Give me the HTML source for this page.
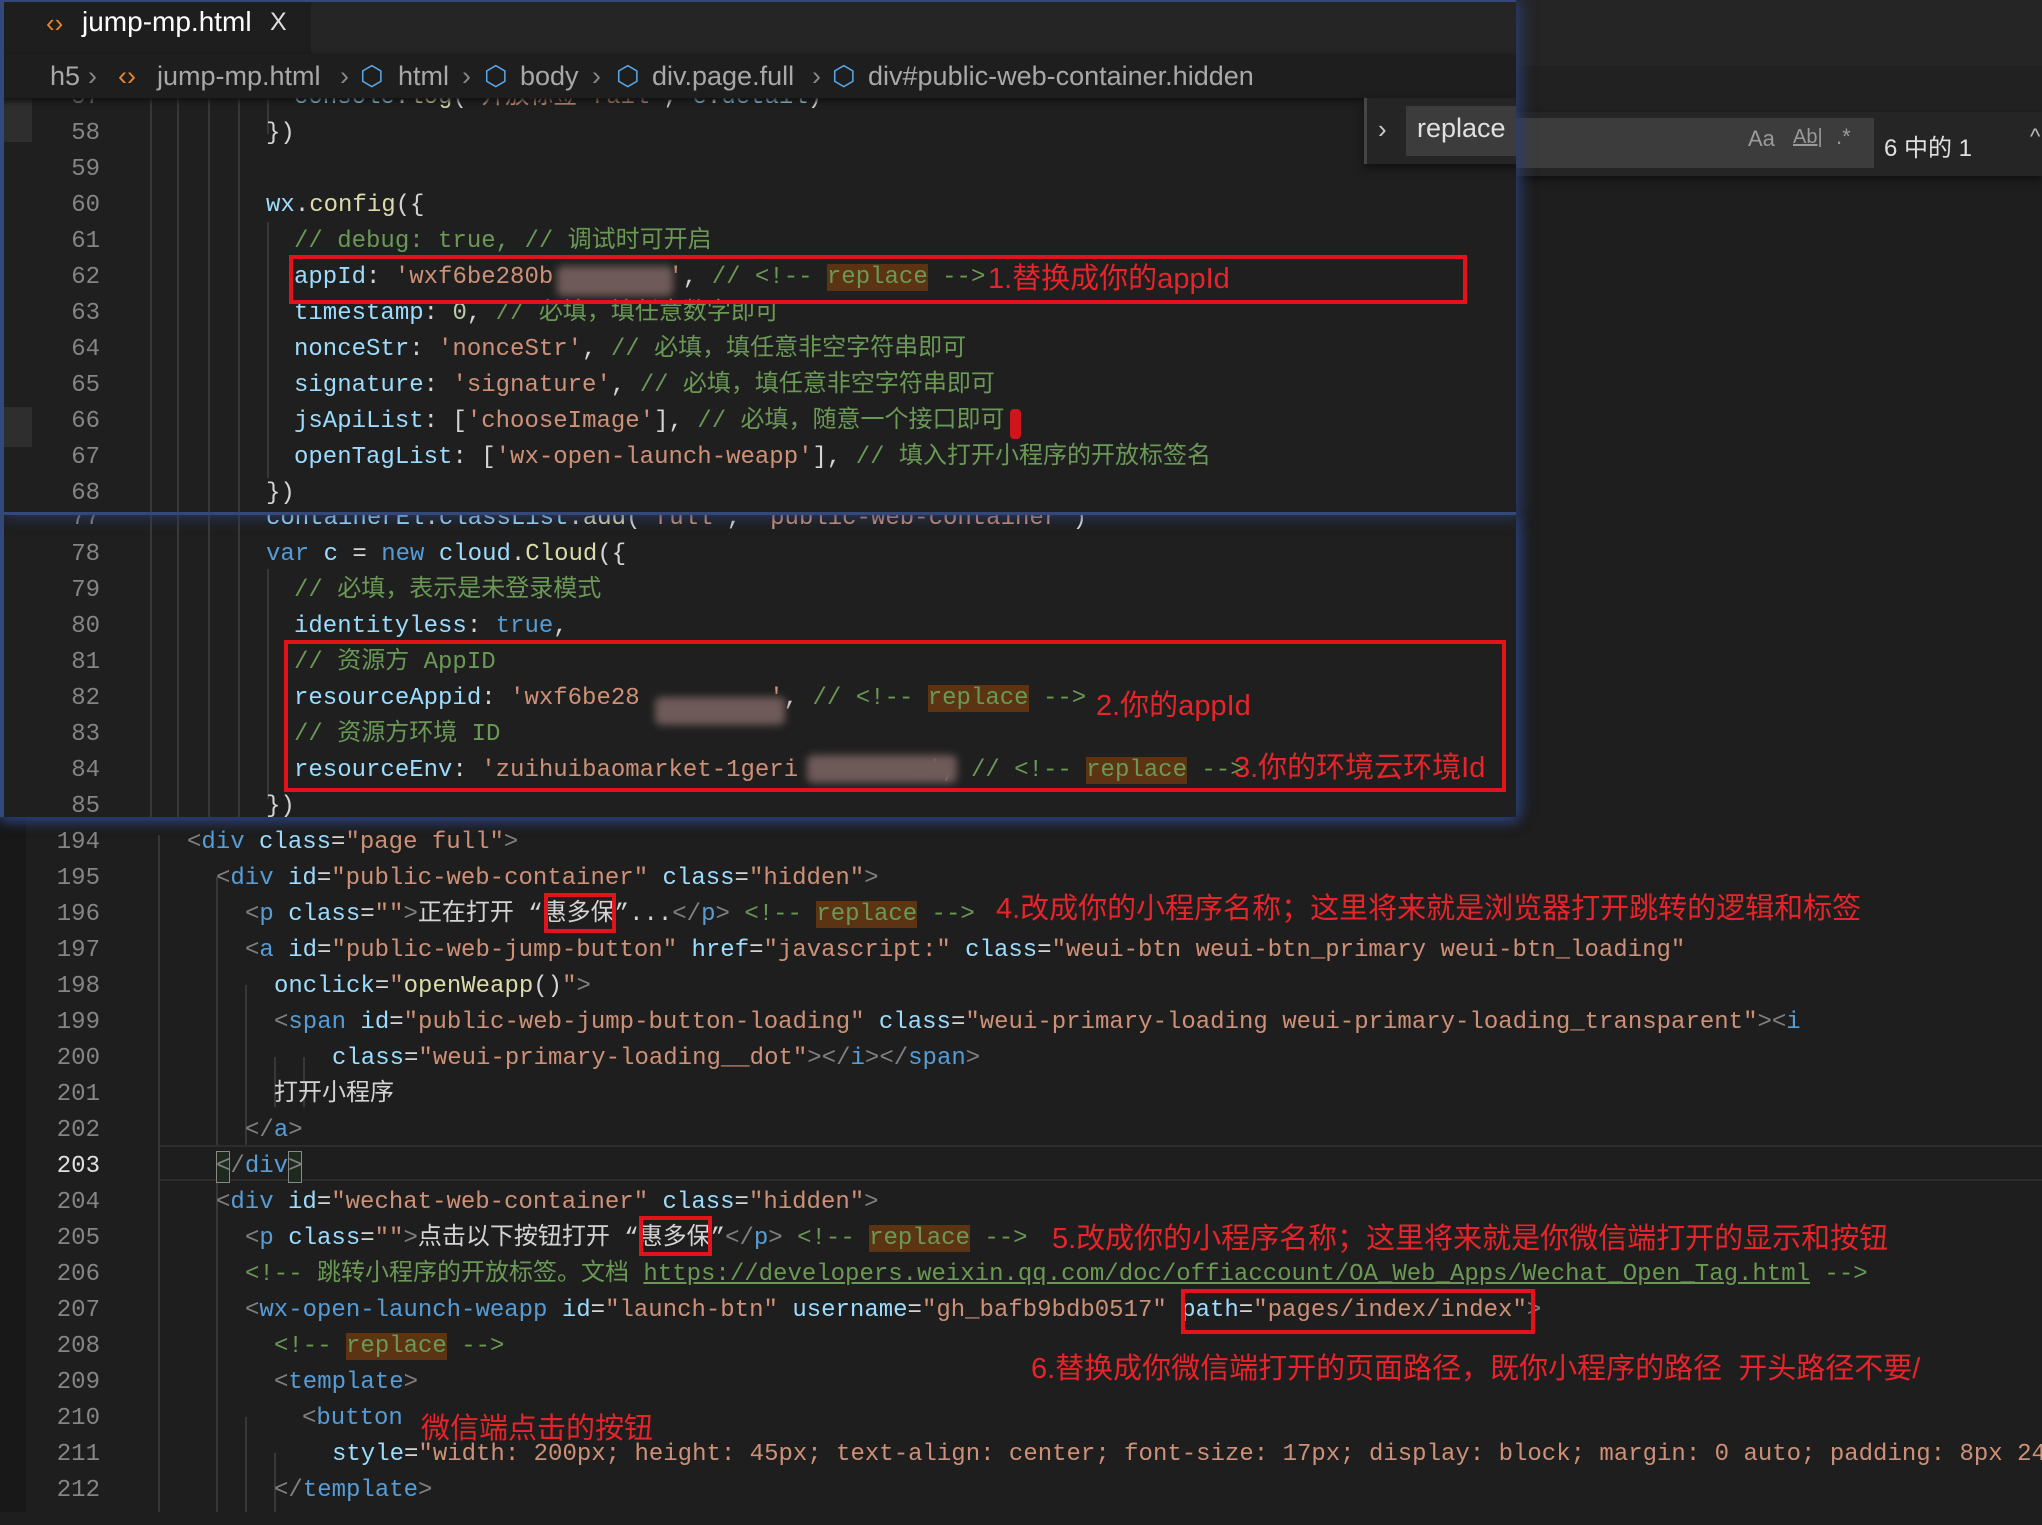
<!DOCTYPE html>
<html><head><meta charset="utf-8">
<style>
*{margin:0;padding:0;box-sizing:border-box}
body{width:2042px;height:1512px;background:#1e1e1e;position:relative;overflow:hidden;font-family:"Liberation Mono","Noto Sans CJK SC",monospace;font-size:24px;color:#d4d4d4}
.abs{position:absolute}
.panel{position:absolute;overflow:hidden;background:#1f1f1f}
.ln{position:absolute;left:0;width:100px;text-align:right;color:#858585;height:36px;line-height:36px}
.cd{position:absolute;white-space:pre;height:36px;line-height:36px}
.g{position:absolute;width:2px;background:#383838}
.t{color:#569cd6}.p{color:#808080}.a{color:#9cdcfe}.s{color:#ce9178}.c{color:#6a9955}.w{color:#d4d4d4}.f{color:#dcdcaa}.n{color:#b5cea8}
.r{background:#5c3414;color:#6a9955}
.red{position:absolute;white-space:pre;color:#e8242a;font-family:"Liberation Sans","Noto Sans CJK SC",sans-serif;font-size:29px;line-height:36px}
.box{position:absolute;border:4px solid #e3131c}
.blur{position:absolute;background:#6e5a58;filter:blur(4px);border-radius:6px}
.sans{font-family:"Liberation Sans","Noto Sans CJK SC",sans-serif}
.bc{position:absolute;top:0;white-space:nowrap}
</style></head><body>

<div class="abs" style="left:1516px;top:0;width:526px;height:66px;background:#252526"></div>
<div class="abs" style="left:1516px;top:66px;width:526px;height:46px;background:#212121"></div>
<div class="abs" style="left:1516px;top:112px;width:526px;height:64px;background:#252526;box-shadow:0 4px 8px #111"></div>
<div class="abs" style="left:1516px;top:118px;width:358px;height:50px;background:#3c3c3c"></div>
<div class="abs sans" style="left:1748px;top:126px;font-size:22px;color:#9a9a9a">Aa</div>
<div class="abs sans" style="left:1793px;top:126px;font-size:20px;color:#9a9a9a;text-decoration:underline">Ab|</div>
<div class="abs sans" style="left:1836px;top:124px;font-size:22px;color:#9a9a9a">.*</div>
<div class="abs sans" style="left:1884px;top:128px;font-size:24px;color:#e0e0e0">6 中的 1</div>
<div class="abs sans" style="left:2030px;top:124px;font-size:22px;color:#bbb">^</div>

<div class="panel" style="left:0;top:817px;width:2042px;height:695px;background:#1e1e1e">
  <div class="abs" style="left:0;top:0;width:26px;height:695px;background:#181818"></div>
  <div class="g" style="left:158px;top:18px;height:677px"></div>
  <div class="g" style="left:216px;top:60px;height:270px"></div>
  <div class="g" style="left:245px;top:168px;height:162px"></div>
  <div class="g" style="left:274px;top:240px;height:50px"></div>
  <div class="g" style="left:303px;top:240px;height:50px"></div>
  <div class="g" style="left:216px;top:360px;height:335px"></div>
  <div class="g" style="left:245px;top:600px;height:95px"></div>
  <div class="g" style="left:274px;top:636px;height:59px"></div>
  <div class="abs" style="left:160px;top:328px;width:1882px;height:36px;border-top:2px solid #2c2c2c;border-bottom:2px solid #2c2c2c"></div>
</div>
<div class="abs" style="left:0;top:825px;width:2042px;height:700px">
  <div class="ln" style="top:0">194</div>
  <div class="ln" style="top:36px">195</div>
  <div class="ln" style="top:72px">196</div>
  <div class="ln" style="top:108px">197</div>
  <div class="ln" style="top:144px">198</div>
  <div class="ln" style="top:180px">199</div>
  <div class="ln" style="top:216px">200</div>
  <div class="ln" style="top:252px">201</div>
  <div class="ln" style="top:288px">202</div>
  <div class="ln" style="top:324px;color:#e0e0e0">203</div>
  <div class="ln" style="top:360px">204</div>
  <div class="ln" style="top:396px">205</div>
  <div class="ln" style="top:432px">206</div>
  <div class="ln" style="top:468px">207</div>
  <div class="ln" style="top:504px">208</div>
  <div class="ln" style="top:540px">209</div>
  <div class="ln" style="top:576px">210</div>
  <div class="ln" style="top:612px">211</div>
  <div class="ln" style="top:648px">212</div>

  <div class="cd" style="left:187px;top:0"><span class="p">&lt;</span><span class="t">div</span> <span class="a">class</span>=<span class="s">"page full"</span><span class="p">&gt;</span></div>
  <div class="cd" style="left:216px;top:36px"><span class="p">&lt;</span><span class="t">div</span> <span class="a">id</span>=<span class="s">"public-web-container"</span> <span class="a">class</span>=<span class="s">"hidden"</span><span class="p">&gt;</span></div>
  <div class="cd" style="left:245px;top:72px"><span class="p">&lt;</span><span class="t">p</span> <span class="a">class</span>=<span class="s">""</span><span class="p">&gt;</span>正在打开 “惠多保”...<span class="p">&lt;/</span><span class="t">p</span><span class="p">&gt;</span> <span class="c">&lt;!-- <span class="r">replace</span> --&gt;</span></div>
  <div class="red" style="left:996px;top:66px">4.改成你的小程序名称；这里将来就是浏览器打开跳转的逻辑和标签</div>
  <div class="cd" style="left:245px;top:108px"><span class="p">&lt;</span><span class="t">a</span> <span class="a">id</span>=<span class="s">"public-web-jump-button"</span> <span class="a">href</span>=<span class="s">"javascript:"</span> <span class="a">class</span>=<span class="s">"weui-btn weui-btn_primary weui-btn_loading"</span></div>
  <div class="cd" style="left:274px;top:144px"><span class="a">onclick</span>=<span class="s">"</span><span class="f">openWeapp</span><span class="w">()</span><span class="s">"</span><span class="p">&gt;</span></div>
  <div class="cd" style="left:274px;top:180px"><span class="p">&lt;</span><span class="t">span</span> <span class="a">id</span>=<span class="s">"public-web-jump-button-loading"</span> <span class="a">class</span>=<span class="s">"weui-primary-loading weui-primary-loading_transparent"</span><span class="p">&gt;&lt;</span><span class="t">i</span></div>
  <div class="cd" style="left:332px;top:216px"><span class="a">class</span>=<span class="s">"weui-primary-loading__dot"</span><span class="p">&gt;&lt;/</span><span class="t">i</span><span class="p">&gt;&lt;/</span><span class="t">span</span><span class="p">&gt;</span></div>
  <div class="cd" style="left:274px;top:252px">打开小程序</div>
  <div class="cd" style="left:245px;top:288px"><span class="p">&lt;/</span><span class="t">a</span><span class="p">&gt;</span></div>
  <div class="abs" style="left:216px;top:326px;width:14px;height:32px;border:1px solid #888;background:#1e2a1e"></div>
  <div class="abs" style="left:288px;top:326px;width:14px;height:32px;border:1px solid #888;background:#1e2a1e"></div>
  <div class="cd" style="left:216px;top:324px"><span class="p">&lt;/</span><span class="t">div</span><span class="p">&gt;</span></div>
  <div class="cd" style="left:216px;top:360px"><span class="p">&lt;</span><span class="t">div</span> <span class="a">id</span>=<span class="s">"wechat-web-container"</span> <span class="a">class</span>=<span class="s">"hidden"</span><span class="p">&gt;</span></div>
  <div class="cd" style="left:245px;top:396px"><span class="p">&lt;</span><span class="t">p</span> <span class="a">class</span>=<span class="s">""</span><span class="p">&gt;</span>点击以下按钮打开 “惠多保”<span class="p">&lt;/</span><span class="t">p</span><span class="p">&gt;</span> <span class="c">&lt;!-- <span class="r">replace</span> --&gt;</span></div>
  <div class="red" style="left:1052px;top:396px">5.改成你的小程序名称；这里将来就是你微信端打开的显示和按钮</div>
  <div class="cd c" style="left:245px;top:432px">&lt;!-- 跳转小程序的开放标签。文档 <span style="text-decoration:underline">https://developers.weixin.qq.com/doc/offiaccount/OA_Web_Apps/Wechat_Open_Tag.html</span> --&gt;</div>
  <div class="cd" style="left:245px;top:468px"><span class="p">&lt;</span><span class="t">wx-open-launch-weapp</span> <span class="a">id</span>=<span class="s">"launch-btn"</span> <span class="a">username</span>=<span class="s">"gh_bafb9bdb0517"</span> <span class="a">path</span>=<span class="s">"pages/index/index"</span><span class="p">&gt;</span></div>
  <div class="cd c" style="left:274px;top:504px">&lt;!-- <span class="r">replace</span> --&gt;</div>
  <div class="cd" style="left:274px;top:540px"><span class="p">&lt;</span><span class="t">template</span><span class="p">&gt;</span></div>
  <div class="red" style="left:1031px;top:526px">6.替换成你微信端打开的页面路径，既你小程序的路径  开头路径不要/</div>
  <div class="cd" style="left:302px;top:576px"><span class="p">&lt;</span><span class="t">button</span></div>
  <div class="red" style="left:421px;top:586px">微信端点击的按钮</div>
  <div class="cd" style="left:332px;top:612px"><span class="a">style</span>=<span class="s">"width: 200px; height: 45px; text-align: center; font-size: 17px; display: block; margin: 0 auto; padding: 8px 24px;"</span></div>
  <div class="cd" style="left:274px;top:648px"><span class="p">&lt;/</span><span class="t">template</span><span class="p">&gt;</span></div>
</div>
<div class="box" style="left:544px;top:893px;width:72px;height:40px"></div>
<div class="box" style="left:639px;top:1216px;width:73px;height:40px"></div>
<div class="box" style="left:1181px;top:1289px;width:354px;height:45px"></div>

<div class="panel" style="left:0;top:515px;width:1516px;height:302px;border-left:4px solid #34497a;box-shadow:0 4px 12px #2a3f74,4px 0 14px #2a3f74">
  <div class="g" style="left:146px;top:0;height:302px"></div>
  <div class="g" style="left:173px;top:0;height:302px"></div>
  <div class="g" style="left:204px;top:0;height:302px"></div>
  <div class="g" style="left:234px;top:0;height:302px"></div>
  <div class="g" style="left:263px;top:54px;height:230px"></div>
  <div class="abs" style="left:0;top:-14px">
    <div class="ln" style="top:0;width:96px">77</div>
    <div class="cd" style="left:262px;top:0"><span class="a">containerEl</span>.<span class="a">classList</span>.<span class="f">add</span>(<span class="s">'full'</span>, <span class="s">'public-web-container'</span>)</div>
    <div class="ln" style="top:36px;width:96px">78</div>
    <div class="cd" style="left:262px;top:36px"><span class="t">var</span> <span class="a">c</span> = <span class="t">new</span> <span class="a">cloud</span>.<span class="f">Cloud</span>({</div>
    <div class="ln" style="top:72px;width:96px">79</div>
    <div class="cd c" style="left:290px;top:72px">// 必填，表示是未登录模式</div>
    <div class="ln" style="top:108px;width:96px">80</div>
    <div class="cd" style="left:290px;top:108px"><span class="a">identityless</span>: <span class="t">true</span>,</div>
    <div class="ln" style="top:144px;width:96px">81</div>
    <div class="cd c" style="left:290px;top:144px">// 资源方 AppID</div>
    <div class="ln" style="top:180px;width:96px">82</div>
    <div class="cd" style="left:290px;top:180px"><span class="a">resourceAppid</span>: <span class="s">'wxf6be28         '</span>, <span class="c">// &lt;!-- <span class="r">replace</span> --&gt;</span></div>
    <div class="ln" style="top:216px;width:96px">83</div>
    <div class="cd c" style="left:290px;top:216px">// 资源方环境 ID</div>
    <div class="ln" style="top:252px;width:96px">84</div>
    <div class="cd" style="left:290px;top:252px"><span class="a">resourceEnv</span>: <span class="s">'zuihuibaomarket-1geri        a'</span>, <span class="c">// &lt;!-- <span class="r">replace</span> --&gt;</span></div>
    <div class="ln" style="top:288px;width:96px">85</div>
    <div class="cd" style="left:262px;top:288px">})</div>
  </div>
  <div class="blur" style="left:651px;top:182px;width:130px;height:28px"></div>
  <div class="blur" style="left:803px;top:240px;width:150px;height:28px"></div>
  <div class="box" style="left:280px;top:125px;width:1222px;height:152px"></div>
  <div class="red" style="left:1092px;top:173px">2.你的appId</div>
  <div class="red" style="left:1230px;top:235px">3.你的环境云环境Id</div>
</div>

<div class="panel" style="left:0;top:0;width:1516px;height:515px;border-left:4px solid #34497a;border-top:2px solid #34497a;border-bottom:3px solid #34497a;box-shadow:4px 0 14px #2a3f74">
  <div class="abs" style="left:0;top:96px;width:28px;height:44px;background:#2e2e2e"></div>
  <div class="abs" style="left:0;top:405px;width:28px;height:40px;background:#2e2e2e"></div>
  <div class="g" style="left:146px;top:96px;height:420px"></div>
  <div class="g" style="left:173px;top:96px;height:420px"></div>
  <div class="g" style="left:204px;top:96px;height:420px"></div>
  <div class="g" style="left:234px;top:96px;height:420px"></div>
  <div class="g" style="left:263px;top:96px;height:36px"></div>
  <div class="g" style="left:263px;top:220px;height:256px"></div>
  <div class="abs" style="left:-4px;top:78px">
    <div class="ln" style="top:0">57</div>
    <div class="cd" style="left:294px;top:0"><span class="a">console</span>.<span class="f">log</span>(<span class="s">'开放标签 fail'</span>, <span class="a">e</span>.<span class="a">detail</span>)</div>
    <div class="ln" style="top:36px">58</div>
    <div class="cd" style="left:266px;top:36px">})</div>
    <div class="ln" style="top:72px">59</div>
    <div class="ln" style="top:108px">60</div>
    <div class="cd" style="left:266px;top:108px"><span class="a">wx</span>.<span class="f">config</span>({</div>
    <div class="ln" style="top:144px">61</div>
    <div class="cd c" style="left:294px;top:144px">// debug: true, // 调试时可开启</div>
    <div class="ln" style="top:180px">62</div>
    <div class="cd" style="left:294px;top:180px"><span class="a">appId</span>: <span class="s">'wxf6be280b        '</span>, <span class="c">// &lt;!-- <span class="r">replace</span> --&gt;</span></div>
    <div class="ln" style="top:216px">63</div>
    <div class="cd" style="left:294px;top:216px"><span class="a">timestamp</span>: <span class="n">0</span>, <span class="c">// 必填，填任意数字即可</span></div>
    <div class="ln" style="top:252px">64</div>
    <div class="cd" style="left:294px;top:252px"><span class="a">nonceStr</span>: <span class="s">'nonceStr'</span>, <span class="c">// 必填，填任意非空字符串即可</span></div>
    <div class="ln" style="top:288px">65</div>
    <div class="cd" style="left:294px;top:288px"><span class="a">signature</span>: <span class="s">'signature'</span>, <span class="c">// 必填，填任意非空字符串即可</span></div>
    <div class="ln" style="top:324px">66</div>
    <div class="cd" style="left:294px;top:324px"><span class="a">jsApiList</span>: [<span class="s">'chooseImage'</span>], <span class="c">// 必填，随意一个接口即可</span></div>
    <div class="ln" style="top:360px">67</div>
    <div class="cd" style="left:294px;top:360px"><span class="a">openTagList</span>: [<span class="s">'wx-open-launch-weapp'</span>], <span class="c">// 填入打开小程序的开放标签名</span></div>
    <div class="ln" style="top:396px">68</div>
    <div class="cd" style="left:266px;top:396px">})</div>
  </div>
  <div class="blur" style="left:553px;top:264px;width:116px;height:30px"></div>
  <div class="abs" style="left:1006px;top:407px;width:11px;height:30px;background:#d0141c;border-radius:4px"></div>
  <div class="box" style="left:285px;top:253px;width:1178px;height:49px"></div>
  <div class="red" style="left:984px;top:259px">1.替换成你的appId</div>

  <div class="abs" style="left:-4px;top:-2px;width:1520px;height:54px;background:#252526"></div>
  <div class="abs" style="left:-4px;top:-2px;width:311px;height:54px;background:#1e1e1e"></div>
  <div class="abs sans" style="left:42px;top:6px;font-size:26px;color:#e8842c">‹›</div>
  <div class="abs sans" style="left:78px;top:4px;font-size:28px;color:#fff">jump-mp.html</div>
  <div class="abs sans" style="left:266px;top:6px;font-size:25px;color:#ddd">X</div>
  <div class="abs sans" style="left:-4px;top:52px;width:1520px;height:44px;background:#1e1e1e;box-shadow:0 3px 6px #111;font-size:27px;color:#a8a8a8;line-height:44px">
    <span class="bc" style="left:50px">h5</span>
    <span class="bc" style="left:88px;color:#888">›</span>
    <span class="bc" style="left:118px;color:#e8842c">‹›</span>
    <span class="bc" style="left:157px">jump-mp.html</span>
    <span class="bc" style="left:340px;color:#888">›</span>
    <span class="bc" style="left:360px;color:#5aa7e8">⬡</span>
    <span class="bc" style="left:398px">html</span>
    <span class="bc" style="left:462px;color:#888">›</span>
    <span class="bc" style="left:484px;color:#5aa7e8">⬡</span>
    <span class="bc" style="left:520px">body</span>
    <span class="bc" style="left:592px;color:#888">›</span>
    <span class="bc" style="left:616px;color:#5aa7e8">⬡</span>
    <span class="bc" style="left:652px">div.page.full</span>
    <span class="bc" style="left:812px;color:#888">›</span>
    <span class="bc" style="left:832px;color:#5aa7e8">⬡</span>
    <span class="bc" style="left:868px">div#public-web-container.hidden</span>
  </div>
  <div class="abs" style="left:1360px;top:96px;width:160px;height:66px;background:#252526;border-left:3px solid #454545;box-shadow:0 4px 8px #111"></div>
  <div class="abs" style="left:1402px;top:104px;width:120px;height:50px;background:#3c3c3c"></div>
  <div class="abs sans" style="left:1374px;top:112px;font-size:26px;color:#ccc">›</div>
  <div class="abs sans" style="left:1413px;top:111px;font-size:27px;color:#e0e0e0">replace</div>
</div>

</body></html>
